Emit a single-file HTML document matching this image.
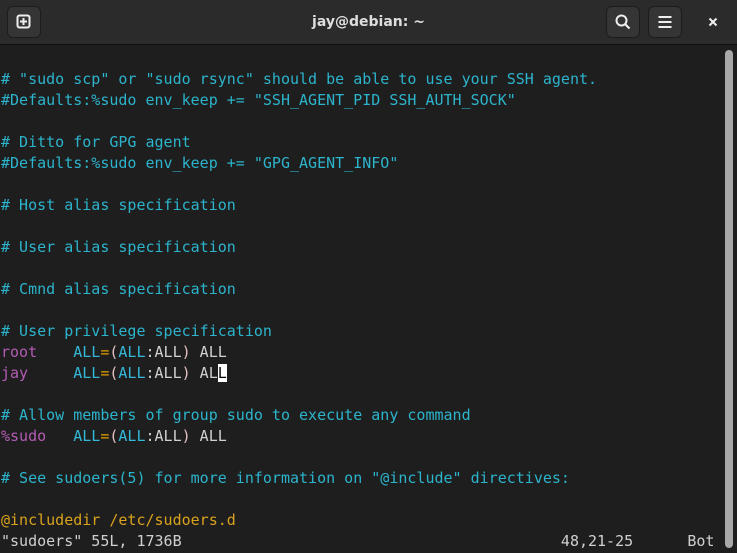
<!DOCTYPE html>
<html><head><meta charset="utf-8"><style>
body{margin:0;width:737px;height:553px;background:#1e1e1e;overflow:hidden;position:relative;font-family:"DejaVu Sans Mono","Liberation Mono",monospace}
.hdr{position:absolute;left:0;top:0;width:737px;height:44px;background:#2b2b2b;border-bottom:1px solid #101010}
.btn{position:absolute;top:6px;width:34px;height:32px;background:#353535;border-radius:6px;border:1px solid #1c1c1c;box-sizing:border-box}
.title{position:absolute;top:0;left:0;width:737px;text-align:center;color:#dedede;font:bold 14px/44px "DejaVu Sans","Liberation Sans",sans-serif}
pre{position:absolute;left:1px;top:69px;margin:0;font-size:15px;line-height:21px;color:#d0d0d0}
.c{color:#2cb4cc}.m{color:#b45cb4}.b{color:#34b8d8}.o{color:#e0a000}.p{color:#e6c2c2}.y{color:#d9a21c}
.cur{background:#fff;color:#000}
.sb{position:absolute;left:725px;top:50px;width:8px;height:498px;background:#a8a8a8;border-radius:4px}
</style></head><body>
<div class="hdr">
<div class="btn" style="left:7px"><svg width="32" height="30" viewBox="0 0 32 30"><rect x="9.5" y="8.5" width="12" height="12" rx="2" fill="none" stroke="#eee" stroke-width="2"/><path d="M15.5 11v7M12 14.5h7" stroke="#eee" stroke-width="2"/></svg></div>
<div class="title">jay@debian: ~</div>
<div class="btn" style="left:606px"><svg width="32" height="30" viewBox="0 0 32 30"><circle cx="14.5" cy="13.5" r="5" fill="none" stroke="#eee" stroke-width="2"/><path d="M18 17l4.5 4.5" stroke="#eee" stroke-width="2.2"/></svg></div>
<div class="btn" style="left:648px"><svg width="32" height="30" viewBox="0 0 32 30"><path d="M9.5 10h13M9.5 15h13M9.5 20h13" stroke="#eee" stroke-width="2"/></svg></div>
<svg style="position:absolute;left:706px;top:15px" width="14" height="14" viewBox="0 0 14 14"><path d="M3.5 3.5l7 7M10.5 3.5l-7 7" stroke="#eee" stroke-width="2"/></svg>
</div>
<pre><span class="c"># "sudo scp" or "sudo rsync" should be able to use your SSH agent.
#Defaults:%sudo env_keep += "SSH_AGENT_PID SSH_AUTH_SOCK"

# Ditto for GPG agent
#Defaults:%sudo env_keep += "GPG_AGENT_INFO"

# Host alias specification

# User alias specification

# Cmnd alias specification

# User privilege specification</span>
<span class="m">root</span>    <span class="b">ALL</span><span class="o">=</span><span class="p">(</span><span class="b">ALL</span>:ALL<span class="p">)</span> ALL
<span class="m">jay</span>     <span class="b">ALL</span><span class="o">=</span><span class="p">(</span><span class="b">ALL</span>:ALL<span class="p">)</span> AL<span class="cur">L</span>

<span class="c"># Allow members of group sudo to execute any command</span>
<span class="m">%sudo</span>   <span class="b">ALL</span><span class="o">=</span><span class="p">(</span><span class="b">ALL</span>:ALL<span class="p">)</span> ALL

<span class="c"># See sudoers(5) for more information on "@include" directives:</span>

<span class="y">@includedir /etc/sudoers.d</span>
"sudoers" 55L, 1736B                                          48,21-25      Bot</pre>
<div class="sb"></div>
</body></html>
